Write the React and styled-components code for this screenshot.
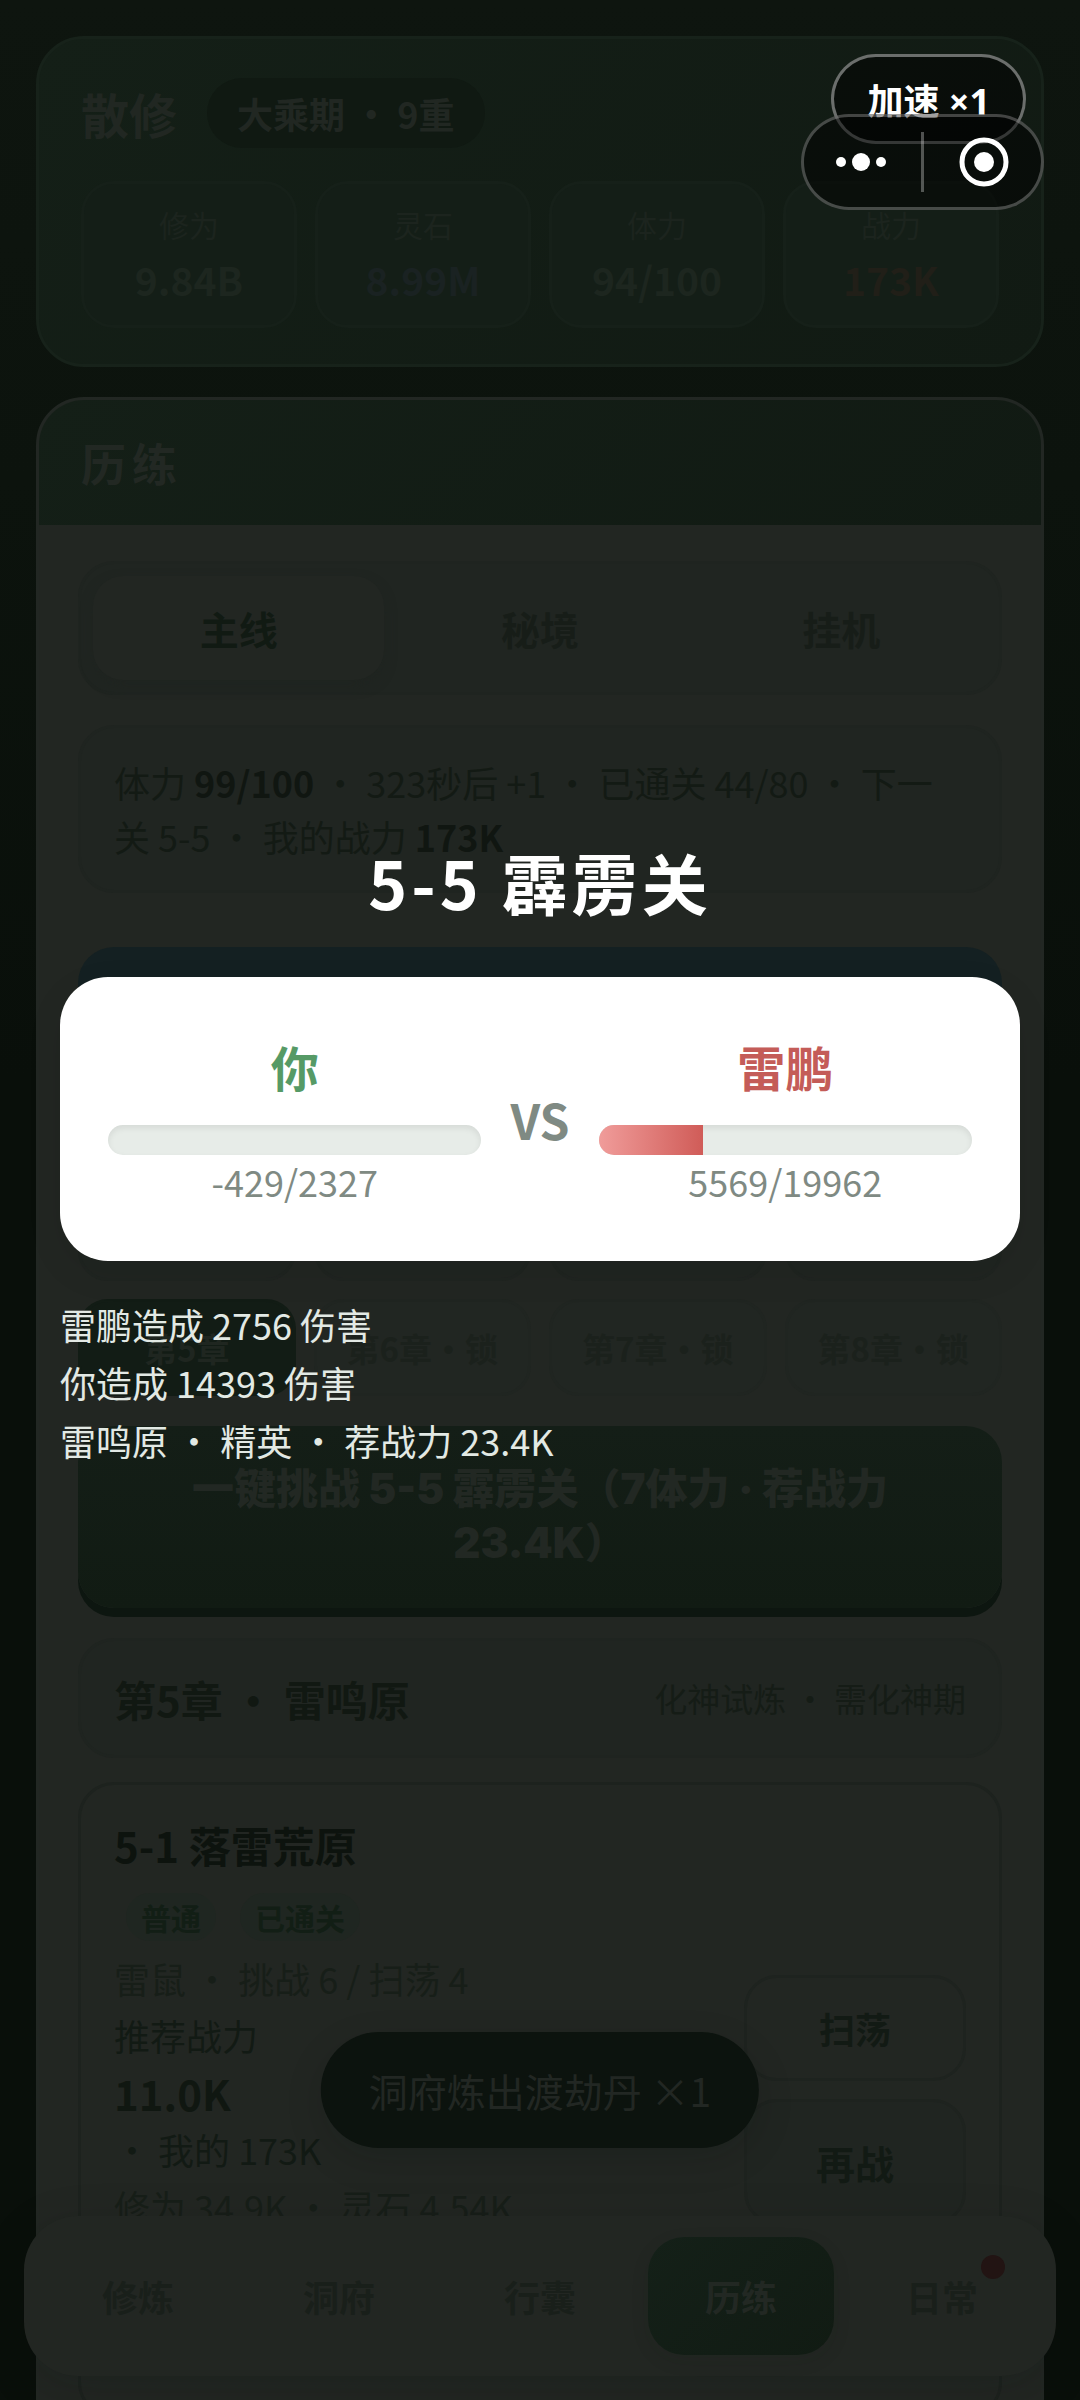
import React from "react";
import styled, { createGlobalStyle, css } from "styled-components";

const GlobalStyle = createGlobalStyle`
  * { box-sizing: border-box; }
  html, body { margin: 0; padding: 0; background: #0b120c; }
  body, button {
    font-family: "Noto Sans CJK SC", "Noto Sans", sans-serif;
  }
  button {
    margin: 0;
    padding: 0;
    border: 0;
    background: none;
    color: inherit;
    cursor: pointer;
  }
  h1, h2, h3, p, ul, dl, dd { margin: 0; padding: 0; font-weight: inherit; }
  ul { list-style: none; }
`;

const Screen = styled.div`
  position: relative;
  height: 100vh;
  overflow: hidden;
  padding: 36px 36px 0;
  background: linear-gradient(180deg, #0e150f 0, #0c130d 20%, #090f0a 45%, #090f0a 100%);
  color: #101611;
  font-size: 36px;
`;

const Page = styled.main`
  display: flex;
  flex-direction: column;
  gap: 30px;
`;

const Hero = styled.header`
  display: flex;
  flex-direction: column;
  gap: 33px;
  padding: 39px 42px 36px;
  border: 3px solid #17221a;
  border-radius: 48px;
  background: linear-gradient(135deg, #141f17, #111a13);
`;

const HeroTop = styled.div`
  display: flex;
  align-items: center;
  gap: 30px;
`;

const PlayerName = styled.h1`
  color: #212722;
  font-size: 48px;
  line-height: 70px;
  font-weight: 700;
`;

const Realm = styled.span`
  padding: 0 30px;
  border-radius: 35px;
  background: #101912;
  color: #212722;
  font-size: 36px;
  line-height: 70px;
  font-weight: 700;
`;

const Stats = styled.dl`
  display: grid;
  grid-template-columns: repeat(4, 1fr);
  gap: 18px;
`;

const Stat = styled.div`
  display: flex;
  flex-direction: column;
  align-items: center;
  gap: 6px;
  height: 147px;
  padding-top: 18px;
  border: 3px solid #162019;
  border-radius: 33px;
  background: #141e17;
`;

const StatLabel = styled.dt`
  color: #1c241e;
  font-size: 30px;
  line-height: 44px;
`;

const StatValue = styled.dd`
  color: ${(p) => p.$color};
  font-size: 39px;
  line-height: 54px;
  font-weight: 700;
`;

const Panel = styled.section`
  border: 3px solid #222723;
  border-radius: 48px;
  overflow: hidden;
  background: #222622;
`;

const PanelHead = styled.div`
  padding: 30px 42px 29px;
  background: linear-gradient(135deg, #141f17, #111a13);
`;

const PanelTitle = styled.h2`
  color: #222823;
  font-size: 45px;
  line-height: 66px;
  font-weight: 700;
  letter-spacing: 6px;
`;

const PanelBody = styled.div`
  display: flex;
  flex-direction: column;
  padding: 36px 39px;
`;

const Tabs = styled.div`
  display: grid;
  grid-template-columns: repeat(3, 1fr);
  gap: 10px;
  padding: 12px;
  border: 3px solid #1f2420;
  border-radius: 36px;
  background: #202521;
`;

const Tab = styled.button`
  height: 104px;
  border-radius: 30px;
  font-size: 39px;
  font-weight: 700;
  color: #171d18;
  ${(p) =>
    p.$active &&
    css`
      color: #111a13;
      background: #222622;
      box-shadow: 0 6px 12px #1f2420;
    `}
`;

const Info = styled.p`
  margin-top: 30px;
  padding: 27px 33px;
  border: 3px solid #1f2420;
  border-radius: 36px;
  background: #202521;
  color: #131a14;
  line-height: 54px;

  b { font-weight: 700; color: #101611; }
`;

const QuickBar = styled.div`
  height: 140px;
  margin-top: 54px;
  border-radius: 36px;
  background: #142022;
`;

const Chapters = styled.div`
  display: grid;
  grid-template-columns: repeat(4, 1fr);
  gap: 18px;
  margin-top: 97px;
`;

const chapterBox = css`
  height: 97px;
  border: 3px solid #1f2420;
  border-radius: 30px;
  background: #202521;
`;

const ChapterSlot = styled.div`
  ${chapterBox}
`;

const Chapter = styled.button`
  ${chapterBox}
  font-size: 33px;
  font-weight: 700;
  color: #1b211c;
  ${(p) =>
    p.$active
      ? css`
          border-color: #121c15;
          background: #121c15;
          color: #1f2620;
        `
      : css`
          border-color: #202521;
          background: #212622;
        `}
`;

const Challenge = styled.button`
  margin-top: 30px;
  padding: 36px 60px 38px;
  border-radius: 36px;
  background: linear-gradient(180deg, #141e17, #111b13);
  box-shadow: 0 9px 0 #0d1610;
  color: #222823;
  font-family: Inter, "Noto Sans CJK SC", sans-serif;
  font-size: 42px;
  line-height: 54px;
  font-weight: 900;
`;

const ChapterHead = styled.div`
  display: flex;
  align-items: center;
  justify-content: space-between;
  height: 120px;
  margin-top: 30px;
  padding: 0 33px;
  border: 3px solid #1f2420;
  border-radius: 36px;
  background: #202521;
`;

const ChapterName = styled.h3`
  font-size: 42px;
  font-weight: 700;
  color: #111812;
`;

const ChapterNote = styled.span`
  font-size: 33px;
  color: #151c16;
`;

const Stage = styled.article`
  display: flex;
  align-items: center;
  justify-content: space-between;
  min-height: 636px;
  margin-top: 24px;
  padding: 24px 33px;
  border: 3px solid #1d221e;
  border-radius: 36px;
  background: #222622;
`;

const StageInfo = styled.div`
  align-self: flex-start;
  line-height: 57px;
`;

const StageName = styled.h3`
  margin-bottom: 12px;
  font-size: 42px;
  line-height: 72px;
  font-weight: 700;
  color: #0d130e;
`;

const Tags = styled.div`
  display: flex;
  align-items: flex-start;
  gap: 24px;
  height: 57px;
  padding-left: 12px;
`;

const Tag = styled.span`
  padding: 0 15px;
  border-radius: 24px;
  background: #1f2621;
  color: #121e15;
  font-size: 30px;
  line-height: 48px;
  font-weight: 700;
`;

const StageLine = styled.p`
  color: ${(p) => (p.$muted ? "#171e18" : "#121a14")};
`;

const StagePower = styled.p`
  font-size: 42px;
  font-weight: 700;
  color: #101711;
`;

const StageActions = styled.div`
  display: flex;
  flex-direction: column;
  gap: 18px;
  width: 222px;
`;

const StageButton = styled.button`
  height: ${(p) => (p.$large ? "126px" : "106px")};
  border: 3px solid #1e231f;
  border-radius: 33px;
  background: ${(p) => (p.$large ? "#202521" : "#222622")};
  color: #121a14;
  font-size: ${(p) => (p.$large ? "39px" : "36px")};
  font-weight: 700;
`;

const BottomNav = styled.nav`
  position: absolute;
  left: 24px;
  right: 24px;
  bottom: 24px;
  display: grid;
  grid-template-columns: repeat(5, 1fr);
  gap: 15px;
  padding: 21px;
  border-radius: 54px;
  background: #222622;
  box-shadow: 0 12px 48px rgba(10, 16, 11, 0.15);
`;

const NavItem = styled.button`
  position: relative;
  height: 118px;
  border-radius: 36px;
  color: #191f1a;
  font-size: 36px;
  font-weight: 700;
  ${(p) =>
    p.$active &&
    css`
      background: linear-gradient(135deg, #142018, #111b13);
      color: #222823;
      box-shadow: 0 6px 18px rgba(17, 27, 19, 0.1);
    `}
`;

const NavDot = styled.i`
  position: absolute;
  top: 18px;
  right: 30px;
  width: 24px;
  height: 24px;
  border-radius: 50%;
  background: #221413;
`;

const Toast = styled.div`
  position: absolute;
  left: 50%;
  bottom: 252px;
  transform: translateX(-50%);
  padding: 0 48px;
  border-radius: 58px;
  background: #0c130e;
  box-shadow: 0 12px 36px rgba(10, 16, 11, 0.15);
  color: #222723;
  font-size: 39px;
  line-height: 116px;
  white-space: nowrap;
`;

const Battle = styled.div`
  position: absolute;
  inset: 0;
  display: flex;
  flex-direction: column;
  justify-content: center;
  padding: 0 60px;
`;

const BattleTitle = styled.h2`
  margin-bottom: 51px;
  color: #fff;
  font-size: 66px;
  line-height: 90px;
  font-weight: 700;
  letter-spacing: 4px;
  text-align: center;
`;

const BattleCard = styled.div`
  display: flex;
  align-items: center;
  gap: 29px;
  padding: 54px 48px;
  border-radius: 48px;
  background: #fff;
  box-shadow: 0 12px 36px rgba(0, 0, 0, 0.08);
`;

const Fighter = styled.div`
  flex: 1;
  text-align: center;
`;

const FighterName = styled.div`
  margin-bottom: 24px;
  color: ${(p) => (p.$foe ? "#c45c58" : "#569a66")};
  font-size: 48px;
  line-height: 70px;
  font-weight: 700;
`;

const HpTrack = styled.div`
  height: 30px;
  border-radius: 15px;
  overflow: hidden;
  background: #e7ece8;
  box-shadow: inset 0 3px 6px rgba(0, 0, 0, 0.08);
`;

const HpFill = styled.div`
  height: 100%;
  background: linear-gradient(90deg, #f09c9a, #d05c58);
`;

const HpText = styled.div`
  color: #7f8a83;
  font-size: 36px;
  line-height: 52px;
`;

const Versus = styled.span`
  color: #7f8a83;
  font-size: 48px;
  font-weight: 700;
`;

const BattleLog = styled.ul`
  min-height: 269px;
  margin-top: 34px;
  color: #e2e9e4;
  line-height: 58px;
`;

const SpeedButton = styled.button`
  position: absolute;
  top: 54px;
  right: 54px;
  height: 90px;
  padding: 0 33px;
  border: 3px solid rgba(255, 255, 255, 0.4);
  border-radius: 45px;
  background: rgba(0, 0, 0, 0.5);
  color: #fff;
  font-family: "Noto Sans", "Noto Sans CJK SC", sans-serif;
  font-size: 36px;
  font-weight: 700;
`;

const Capsule = styled.div`
  position: absolute;
  top: 114px;
  right: 36px;
  display: flex;
  align-items: center;
  justify-content: space-between;
  width: 243px;
  height: 96px;
  padding: 0 32px;
  border: 3px solid rgba(255, 255, 255, 0.25);
  border-radius: 48px;
  background: rgba(0, 0, 0, 0.5);
`;

const CapsuleButton = styled.button`
  display: flex;
  align-items: center;
  justify-content: center;
  width: 50px;
  height: 100%;
`;

const CapsuleDivider = styled.span`
  width: 3px;
  height: 60px;
  background: rgba(255, 255, 255, 0.3);
`;

const STATS = [
  { label: "修为", value: "9.84B", color: "#1d261f" },
  { label: "灵石", value: "8.99M", color: "#1a2222" },
  { label: "体力", value: "94/100", color: "#1d261f" },
  { label: "战力", value: "173K", color: "#211f18" },
];

const TABS = ["主线", "秘境", "挂机"];
const CHAPTERS = ["第5章", "第6章·锁", "第7章·锁", "第8章·锁"];
const NAV = ["修炼", "洞府", "行囊", "历练", "日常"];
const LOG = ["雷鹏造成 2756 伤害", "你造成 14393 伤害", "雷鸣原 · 精英 · 荐战力 23.4K"];
const FIGHTERS = [
  { name: "你", hp: -429, max: 2327 },
  { name: "雷鹏", hp: 5569, max: 19962, foe: true },
];

function FighterView({ name, hp, max, foe }) {
  const ratio = Math.max(0, hp / max) * 100;
  return (
    <Fighter>
      <FighterName $foe={foe}>{name}</FighterName>
      <HpTrack>
        <HpFill style={{ width: `${ratio}%` }} />
      </HpTrack>
      <HpText>{`${hp}/${max}`}</HpText>
    </Fighter>
  );
}

export default function App() {
  return (
    <>
      <GlobalStyle />
      <Screen>
        <Page>
          <Hero>
            <HeroTop>
              <PlayerName>散修</PlayerName>
              <Realm>大乘期 · 9重</Realm>
            </HeroTop>
            <Stats>
              {STATS.map((s) => (
                <Stat key={s.label}>
                  <StatLabel>{s.label}</StatLabel>
                  <StatValue $color={s.color}>{s.value}</StatValue>
                </Stat>
              ))}
            </Stats>
          </Hero>

          <Panel>
            <PanelHead>
              <PanelTitle>历练</PanelTitle>
            </PanelHead>
            <PanelBody>
              <Tabs>
                {TABS.map((t, i) => (
                  <Tab key={t} $active={i === 0}>{t}</Tab>
                ))}
              </Tabs>
              <Info>
                体力 <b>99/100</b> · 323秒后 +1 · 已通关 44/80 · 下一关 5-5 · 我的战力 <b>173K</b>
              </Info>
              <QuickBar />
              <Chapters>
                {CHAPTERS.map((c) => (
                  <ChapterSlot key={c} />
                ))}
                {CHAPTERS.map((c, i) => (
                  <Chapter key={c} $active={i === 0}>{c}</Chapter>
                ))}
              </Chapters>
              <Challenge>一键挑战 5-5 霹雳关（7体力 · 荐战力 23.4K）</Challenge>
              <ChapterHead>
                <ChapterName>第5章 · 雷鸣原</ChapterName>
                <ChapterNote>化神试炼 · 需化神期</ChapterNote>
              </ChapterHead>
              <Stage>
                <StageInfo>
                  <StageName>5-1 落雷荒原</StageName>
                  <Tags>
                    <Tag>普通</Tag>
                    <Tag>已通关</Tag>
                  </Tags>
                  <StageLine $muted>雷鼠 · 挑战 6 / 扫荡 4</StageLine>
                  <StageLine>推荐战力</StageLine>
                  <StagePower>11.0K</StagePower>
                  <StageLine>· 我的 173K</StageLine>
                  <StageLine $muted>修为 34.9K · 灵石 4.54K</StageLine>
                </StageInfo>
                <StageActions>
                  <StageButton>扫荡</StageButton>
                  <StageButton $large>再战</StageButton>
                </StageActions>
              </Stage>
            </PanelBody>
          </Panel>
        </Page>

        <Toast>洞府炼出渡劫丹 ×1</Toast>

        <BottomNav>
          {NAV.map((n) => (
            <NavItem key={n} $active={n === "历练"}>
              {n}
              {n === "日常" && <NavDot />}
            </NavItem>
          ))}
        </BottomNav>

        <Battle>
          <BattleTitle>5-5 霹雳关</BattleTitle>
          <BattleCard>
            <FighterView {...FIGHTERS[0]} />
            <Versus>VS</Versus>
            <FighterView {...FIGHTERS[1]} />
          </BattleCard>
          <BattleLog>
            {LOG.map((l) => (
              <li key={l}>{l}</li>
            ))}
          </BattleLog>
        </Battle>

        <SpeedButton>加速 ×1</SpeedButton>
        <Capsule>
          <CapsuleButton>
            <svg width="50" height="18" viewBox="0 0 50 18" fill="#fff" aria-hidden="true">
              <circle cx="5" cy="9" r="5" />
              <circle cx="25" cy="9" r="9" />
              <circle cx="45" cy="9" r="5" />
            </svg>
          </CapsuleButton>
          <CapsuleDivider />
          <CapsuleButton>
            <svg width="50" height="50" viewBox="0 0 50 50" aria-hidden="true">
              <circle cx="25" cy="25" r="22" fill="none" stroke="#fff" strokeWidth="5" />
              <circle cx="25" cy="25" r="10" fill="#fff" />
            </svg>
          </CapsuleButton>
        </Capsule>
      </Screen>
    </>
  );
}
